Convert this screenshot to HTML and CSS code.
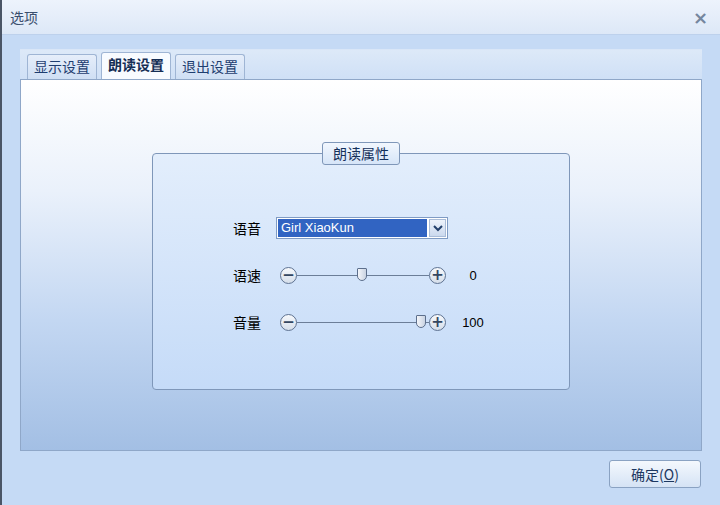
FILE: index.html
```html
<!DOCTYPE html>
<html lang="zh-CN">
<head>
  <meta charset="UTF-8">
  <title>选项</title>
  <link rel="stylesheet" href="styles.css">
</head>
<body>
  <div class="window">
    <div class="titlebar">
      <span class="title">选项</span>
      <span class="close">×</span>
    </div>

    <div class="body">
      <!-- Onglets -->
      <div class="tabs">
        <div class="tab">显示设置</div>
        <div class="tab active">朗读设置</div>
        <div class="tab">退出设置</div>
      </div>

      <div class="panel">
        <div class="group">
          <div class="legend">朗读属性</div>

          <div class="row">
            <span class="label">语音</span>
            <div class="combo">
              <span class="combo-text">Girl XiaoKun</span>
              <span class="combo-btn">
                <svg width="10" height="7" viewBox="0 0 10 7"><path d="M1 1 L5 5 L9 1" fill="none" stroke="#24406b" stroke-width="2"/></svg>
              </span>
            </div>
          </div>

          <div class="row">
            <span class="label">语速</span>
            <div class="slider">
              <span class="round">−</span>
              <div class="track"><div class="range"><span class="thumb" style="left: 50%"></span></div></div>
              <span class="round">+</span>
            </div>
            <span class="value">0</span>
          </div>

          <div class="row">
            <span class="label">音量</span>
            <div class="slider">
              <span class="round">−</span>
              <div class="track"><div class="range"><span class="thumb" style="left: 100%"></span></div></div>
              <span class="round">+</span>
            </div>
            <span class="value">100</span>
          </div>
        </div>
      </div>

      <div class="footer">
        <button type="button" class="ok-btn">确定(<u>O</u>)</button>
      </div>
    </div>
  </div>
</body>
</html>
```

FILE: styles.css
```css
body {
  margin: 0;
  font-family: "Noto Sans CJK SC", "Liberation Sans", sans-serif;
  font-size: 13px;
}
.window {
  width: 720px;
  height: 505px;
  box-sizing: border-box;
  background: #c5daf5;
  border-left: 2px solid #4a5566;
  overflow: hidden;
}
.titlebar {
  height: 35px;
  box-sizing: border-box;
  display: flex;
  align-items: center;
  justify-content: space-between;
  padding: 0 12px 0 8px;
  background: linear-gradient(#edf3fc, #dde8f7);
  border-bottom: 1px solid #bdd1ec;
}
.title {
  color: #3a4f6e;
  font-size: 14px;
}
.close {
  color: #74869e;
  font-family: "DejaVu Sans", sans-serif;
  font-size: 18px;
  font-weight: bold;
  line-height: 1;
  margin-top: 2px;
}
.body {
  padding: 14px 18px 0 18px;
}
.tabs {
  display: flex;
  gap: 4px;
  height: 29px;
  padding-left: 7px;
  align-items: flex-end;
  background: linear-gradient(#dde9f8, #cfe0f6);
  border-top: 1px solid #d9e6f7;
}
.tab {
  height: 25px;
  box-sizing: border-box;
  padding: 0 6px;
  border: 1px solid #9fb5d4;
  border-bottom: none;
  border-radius: 3px 3px 0 0;
  background: linear-gradient(#e6eefa, #cfdff4);
  color: #1e3e70;
  font-size: 14px;
  line-height: 22px;
}
.tab.active {
  height: 27px;
  background: #f8fbff;
  font-weight: bold;
  color: #152e55;
  line-height: 23px;
}
.panel {
  height: 372px;
  box-sizing: border-box;
  border: 1px solid #8fa7c8;
  background: linear-gradient(#ffffff 0%, #eaf1fb 30%, #c3d7f2 65%, #a3bfe4 100%);
  padding-top: 73px;
  padding-left: 131px;
}
.group {
  position: relative;
  width: 418px;
  height: 237px;
  box-sizing: border-box;
  border: 1px solid #7f97b9;
  border-radius: 4px;
  background: linear-gradient(#e3eefc, #c5dbf8);
  padding-top: 62px;
  padding-left: 80px;
}
.legend {
  position: absolute;
  top: -12px;
  left: 169px;
  width: 78px;
  height: 23px;
  box-sizing: border-box;
  border: 1px solid #7f97b9;
  border-radius: 3px;
  background: linear-gradient(#f2f7fe, #d6e5f8);
  color: #15305a;
  font-size: 14px;
  text-align: center;
  line-height: 21px;
}
.row {
  display: flex;
  align-items: center;
  height: 24px;
  margin-bottom: 23px;
}
.label {
  width: 43px;
  color: #000;
  font-size: 14px;
}
.combo {
  display: flex;
  width: 172px;
  height: 22px;
  box-sizing: border-box;
  border: 1px solid #7f9bc4;
  background: #fff;
  padding: 1px;
}
.combo-text {
  flex: 1;
  background: #3164c2;
  color: #fff;
  font-family: "Liberation Sans", sans-serif;
  font-size: 13px;
  line-height: 18px;
  padding-left: 3px;
}
.combo-btn {
  width: 17px;
  margin-left: 2px;
  display: flex;
  align-items: center;
  justify-content: center;
  background: linear-gradient(#eef3fb, #cbd9ee);
  border: 1px solid #a9bcd8;
  box-sizing: border-box;
}
.slider {
  display: flex;
  align-items: center;
  width: 166px;
  margin-left: 4px;
}
.round {
  width: 17px;
  height: 17px;
  box-sizing: border-box;
  border: 1px solid #5f7392;
  border-radius: 50%;
  background: linear-gradient(#f7f9fc, #d5deea);
  color: #344660;
  font-family: "DejaVu Sans", sans-serif;
  font-size: 15px;
  font-weight: bold;
  line-height: 14px;
  text-align: center;
}
.track {
  position: relative;
  flex: 1;
  height: 1px;
  background: #6c7e98;
}
.range {
  position: absolute;
  left: 6px;
  right: 8px;
  top: 0;
  height: 1px;
}
.thumb {
  position: absolute;
  top: -7px;
  width: 10px;
  height: 13px;
  margin-left: -5px;
  box-sizing: border-box;
  border: 1px solid #5d6f8c;
  border-radius: 1px 1px 5px 5px;
  background: linear-gradient(90deg, #f4f6fa, #c9d3e2);
}
.value {
  width: 32px;
  margin-left: 11px;
  text-align: center;
  font-family: "Liberation Sans", sans-serif;
  font-size: 13px;
  color: #000;
}
.footer {
  display: flex;
  justify-content: flex-end;
  padding-top: 9px;
}
.ok-btn {
  width: 92px;
  height: 28px;
  border: 1px solid #8aa2c2;
  border-radius: 3px;
  background: linear-gradient(#f4f8fd, #d5e3f5);
  color: #1c3760;
  font-family: "Noto Sans CJK SC", sans-serif;
  font-size: 14px;
  margin-right: 1px;
  padding: 0;
}
```
